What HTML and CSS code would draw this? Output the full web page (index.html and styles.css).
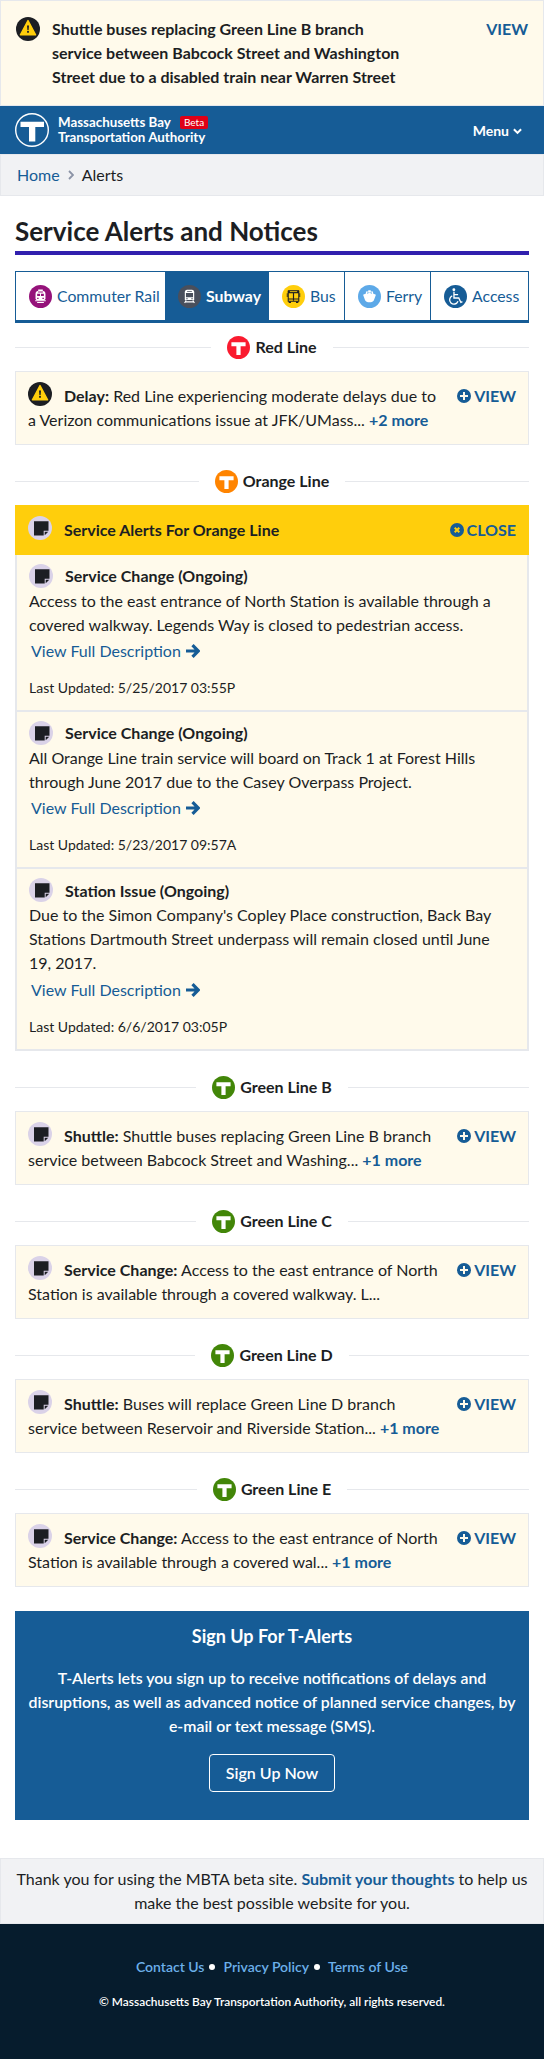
FILE: index.html
```html
<!DOCTYPE html>
<html lang="en">
<head>
<meta charset="utf-8">
<title>Alerts | MBTA</title>
<link rel="stylesheet" href="styles.css">
</head>
<body>
<svg width="0" height="0" class="defs">
  <symbol id="warn" viewBox="0 0 24 24"><circle cx="12" cy="12" r="12" fill="#1c1e23"/><path d="M12 3.6 19.6 17.8H4.4Z" fill="#ffce0c" stroke="#ffce0c" stroke-width="1.4" stroke-linejoin="round"/><path d="M11 8.4h2l-.4 4.8h-1.2zM11.1 14h1.8v1.7h-1.8z" fill="#1c1e23"/></symbol>
  <symbol id="note" viewBox="0 0 24 24"><circle cx="12" cy="12" r="12" fill="#dad2e8"/><path d="M6 5.300h14.500v9.400h-4.800v4.900H6z" fill="#1c1e23"/><path d="M16.700 15.700h3.600l-3.600 3.600z" fill="#1c1e23"/></symbol>
  <symbol id="tee" viewBox="0 0 24 24"><circle cx="12" cy="12" r="12" fill="currentColor"/><path d="M4.600 6.500h14.800v4.300h-5.200v8.900H9.800v-8.900H4.600z" fill="#fff"/></symbol>
  <symbol id="plus" viewBox="0 0 14 14"><circle cx="7" cy="7" r="7" fill="currentColor"/><path d="M7 3v8M3 7h8" stroke="#fffaeb" stroke-width="2"/></symbol>
  <symbol id="times" viewBox="0 0 14 14"><circle cx="7" cy="7" r="7" fill="currentColor"/><path d="m4.700 4.700 4.600 4.600m0-4.600L4.700 9.300" stroke="#ffce0c" stroke-width="2"/></symbol>
  <symbol id="arrow" viewBox="0 0 14 14"><path d="M0 7h11M6.500 1.200 12.300 7l-5.800 5.800" fill="none" stroke="currentColor" stroke-width="3.200"/></symbol>
</svg>

<section class="banner">
  <svg class="badge"><use href="#warn"/></svg>
  <p class="banner-text">Shuttle buses replacing Green Line B branch service between Babcock Street and Washington Street due to a disabled train near Warren Street</p>
  <a class="banner-view">VIEW</a>
</section>

<header class="header">
  <svg class="logo" viewBox="0 0 34 34"><circle cx="17" cy="17" r="16.300" fill="none" stroke="#fff" stroke-width="1.400"/><path d="M5.500 8.700H29V14h-8.700v14.500H14V14H5.500z" fill="#fff"/></svg>
  <div class="brand">
    <div class="brand-row">Massachusetts Bay<span class="beta">Beta</span></div>
    <div>Transportation Authority</div>
  </div>
  <div class="menu">Menu<svg width="9" height="7" viewBox="0 0 9 7"><path d="M.9 1.200 4.500 4.900 8.100 1.200" fill="none" stroke="#fff" stroke-width="2"/></svg></div>
</header>

<nav class="crumbs">
  <a>Home</a>
  <svg width="6" height="10" viewBox="0 0 6 10"><path d="m1 1 4 4-4 4" fill="none" stroke="#8b93a6" stroke-width="1.800"/></svg>
  <span>Alerts</span>
</nav>

<main class="main">
  <h1 class="title">Service Alerts and Notices</h1>
  <div class="tabs">
    <a class="tab tab-rail"><svg class="mode" viewBox="0 0 24 24"><circle cx="12" cy="12" r="12" fill="#95127a"/><path d="M9.600 4.800h4.800v1.200c1.900.4 2.800 1.600 2.800 3.300v5.400l-1.200 1.300H8l-1.200-1.300V9.300c0-1.700.9-2.900 2.800-3.300z" fill="#fff"/><path d="M8.500 9h3v2.600h-3zM12.500 9h3v2.600h-3zM9.500 6.900h5v.8h-5z" fill="#95127a"/><path d="M8.500 13.400H10v1.200H8.500zM14 13.400h1.500v1.200H14z" fill="#95127a"/><path d="M6.500 16.400h11M8.500 18.300h7" stroke="#fff" stroke-width="1.200"/></svg>Commuter Rail</a>
    <a class="tab tab-subway"><svg class="mode" viewBox="0 0 24 24"><circle cx="12" cy="12" r="12" fill="#494f5c"/><path d="M9.500 5h5c1.600 0 2.400 1 2.400 2.500v8.200H7.100V7.500C7.100 6 7.900 5 9.500 5z" fill="#fff"/><path d="M8.300 8.300h7.400v4.600H8.300zM9.500 6.200h5v.9h-5zM8.600 13.800h1.500v1H8.600zM13.900 13.800h1.500v1h-1.500z" fill="#494f5c"/><path d="m8.500 16-1.600 2.700M15.500 16l1.600 2.700M8 17.600h8" stroke="#fff" stroke-width="1.100"/></svg>Subway</a>
    <a class="tab tab-bus"><svg class="mode" viewBox="0 0 24 24"><circle cx="12" cy="12" r="12" fill="#ffce0c"/><path d="M6.500 6.500h11v10.500h-11z" fill="none" stroke="#1c1e23" stroke-width="1.100"/><path d="M6.200 5.500h11.600v3H6.200zM11.400 8h1.200v8.500h-1.200zM6.500 14.200h11v.9h-11zM7 17.200h2.400v1.500H7zM14.600 17.200H17v1.500h-2.400zM5 8.500h.9v4H5zM18.100 8.500h.9v4h-.9z" fill="#1c1e23"/><path d="M8.200 6.500h7.600v.9H8.200z" fill="#ffce0c"/></svg>Bus</a>
    <a class="tab tab-ferry"><svg class="mode" viewBox="0 0 24 24"><circle cx="12" cy="12" r="12" fill="#5da9e8"/><path d="M10.700 5.500h2.600v1.200h2.400v2.200l3 1.400-2 5.400c-.6 1.400-2.500 2.400-4.700 2.400s-4.100-1-4.700-2.400l-2-5.400 3-1.400V6.700h2.400z" fill="#fff"/><path d="M9.500 7.900h5v1.100L12 8l-2.500 1z" fill="#5da9e8"/></svg>Ferry</a>
    <a class="tab tab-access"><svg class="mode" viewBox="0 0 24 24"><circle cx="12" cy="12" r="12" fill="#165c96"/><circle cx="10.300" cy="5" r="1.500" fill="#fff"/><path d="M10.400 7v6.600h5l2.200 4.600 1.600-.8M10.700 10h4M8.600 11.300a4.500 4.500 0 1 0 6 5.700" fill="none" stroke="#fff" stroke-width="1.400"/></svg>Access</a>
  </div>

  <h2 class="line"><svg class="tee red"><use href="#tee"/></svg>Red Line</h2>
  <article class="card">
    <p class="card-text"><svg class="badge"><use href="#warn"/></svg><b>Delay:</b> Red Line experiencing moderate delays due to<br>a Verizon communications issue at JFK/UMass... <b class="more">+2 more</b></p>
    <a class="toggle"><svg><use href="#plus"/></svg>VIEW</a>
  </article>

  <h2 class="line"><svg class="tee orange"><use href="#tee"/></svg>Orange Line</h2>
  <article class="open">
    <header class="open-head">
      <svg class="badge"><use href="#note"/></svg><b>Service Alerts For Orange Line</b>
      <a class="toggle"><svg><use href="#times"/></svg>CLOSE</a>
    </header>
    <section class="item">
      <h3><svg class="badge"><use href="#note"/></svg>Service Change (Ongoing)</h3>
      <p>Access to the east entrance of North Station is available through a covered walkway. Legends Way is closed to pedestrian access.</p>
      <a class="full">View Full Description<svg><use href="#arrow"/></svg></a>
      <small>Last Updated: 5/25/2017 03:55P</small>
    </section>
    <section class="item">
      <h3><svg class="badge"><use href="#note"/></svg>Service Change (Ongoing)</h3>
      <p>All Orange Line train service will board on Track 1 at Forest Hills through June 2017 due to the Casey Overpass Project.</p>
      <a class="full">View Full Description<svg><use href="#arrow"/></svg></a>
      <small>Last Updated: 5/23/2017 09:57A</small>
    </section>
    <section class="item">
      <h3><svg class="badge"><use href="#note"/></svg>Station Issue (Ongoing)</h3>
      <p>Due to the Simon Company's Copley Place construction, Back Bay Stations Dartmouth Street underpass will remain closed until June 19, 2017.</p>
      <a class="full">View Full Description<svg><use href="#arrow"/></svg></a>
      <small>Last Updated: 6/6/2017 03:05P</small>
    </section>
  </article>

  <h2 class="line"><svg class="tee green"><use href="#tee"/></svg>Green Line B</h2>
  <article class="card">
    <p class="card-text"><svg class="badge"><use href="#note"/></svg><b>Shuttle:</b> Shuttle buses replacing Green Line B branch<br>service between Babcock Street and Washing... <b class="more">+1 more</b></p>
    <a class="toggle"><svg><use href="#plus"/></svg>VIEW</a>
  </article>

  <h2 class="line"><svg class="tee green"><use href="#tee"/></svg>Green Line C</h2>
  <article class="card">
    <p class="card-text"><svg class="badge"><use href="#note"/></svg><b>Service Change:</b> Access to the east entrance of North<br>Station is available through a covered walkway. L...</p>
    <a class="toggle"><svg><use href="#plus"/></svg>VIEW</a>
  </article>

  <h2 class="line"><svg class="tee green"><use href="#tee"/></svg>Green Line D</h2>
  <article class="card">
    <p class="card-text"><svg class="badge"><use href="#note"/></svg><b>Shuttle:</b> Buses will replace Green Line D branch<br>service between Reservoir and Riverside Station... <b class="more">+1 more</b></p>
    <a class="toggle"><svg><use href="#plus"/></svg>VIEW</a>
  </article>

  <h2 class="line"><svg class="tee green"><use href="#tee"/></svg>Green Line E</h2>
  <article class="card">
    <p class="card-text"><svg class="badge"><use href="#note"/></svg><b>Service Change:</b> Access to the east entrance of North<br>Station is available through a covered wal... <b class="more">+1 more</b></p>
    <a class="toggle"><svg><use href="#plus"/></svg>VIEW</a>
  </article>

  <section class="signup">
    <h2>Sign Up For T-Alerts</h2>
    <p>T-Alerts lets you sign up to receive notifications of delays and<br>disruptions, as well as advanced notice of planned service changes, by<br>e-mail or text message (SMS).</p>
    <a class="button">Sign Up Now</a>
  </section>
</main>

<section class="thanks">Thank you for using the MBTA beta site. <b class="more">Submit your thoughts</b> to help us<br>make the best possible website for you.</section>

<footer class="footer">
  <div class="links"><a>Contact Us</a><i></i><a>Privacy Policy</a><i></i><a>Terms of Use</a></div>
  <div class="copy">© Massachusetts Bay Transportation Authority, all rights reserved.</div>
</footer>
</body>
</html>
```
FILE: styles.css
```css
* { box-sizing: border-box; }
body { margin: 0; background: #fff; color: #1c1e23; font: 16px/24px Lato, sans-serif; }
h1, h2, h3, p { margin: 0; }
svg { flex: none; }
.defs { display: block; height: 0; }
b { font-weight: 700; }
.badge { width: 24px; height: 24px; }
.more { color: #165c96; }

.banner { height: 106px; display: flex; align-items: flex-start; padding: 16px 15px; background: #fffaeb; border: 1px solid #e6e8ec; }
.banner-text { margin-left: 12px; width: 360px; font-weight: 700; }
.banner-view { margin-left: auto; color: #165c96; font-weight: 700; }

.header { height: 48px; display: flex; align-items: center; padding: 0 22px 0 15px; background: #165c96; color: #fff; }
.logo { width: 34px; height: 34px; }
.brand { margin-left: 9px; font-size: 13.350px; line-height: 15.500px; font-weight: 700; }
.brand-row { display: flex; align-items: center; }
.beta { margin-left: 9px; height: 13px; padding: 0 4px; border-radius: 2px; background: #df0016; font-size: 10px; line-height: 13px; font-weight: 400; }
.menu { margin-left: auto; display: flex; align-items: center; gap: 4px; font-size: 14px; font-weight: 700; padding-top: 2px; }

.crumbs { height: 42px; display: flex; align-items: center; gap: 8px; padding: 0 16px; background: #f1f2f4; border: 1px solid #e6e8ec; }
.crumbs a { color: #165c96; }

.main { padding: 17px 15px 38px; }
.title { height: 42px; border-bottom: 4px solid #3120ae; font-size: 26px; line-height: 36px; font-weight: 700; }
.tabs { margin-top: 16px; height: 52px; display: flex; border: 1px solid #165c96; border-bottom-width: 3px; }
.tab { display: flex; align-items: center; gap: 5px; padding-left: 13px; color: #165c96; border-right: 1px solid #165c96; font-size: 15.800px; white-space: nowrap; }
.tab:last-child { border-right: 0; }
.mode { width: 23px; height: 23px; }
.tab-rail { width: 149px; border: 0; }
.tab-subway { width: 104px; background: #165c96; color: #fff; font-weight: 700; }
.tab-bus { width: 76px; }
.tab-ferry { width: 86px; }
.tab-access { flex: 1; }

.line { height: 24px; margin: 12px 0; display: flex; align-items: center; font-size: 16px; font-weight: 700; }
.line::before, .line::after { content: ""; flex: 1; height: 1px; background: #e6e8ec; }
.line::before { margin-right: 16px; }
.line::after { margin-left: 16px; }
.tee { width: 23px; height: 23px; margin-right: 5px; }
.red { color: #fa1b2f; }
.orange { color: #ff8400; }
.green { color: #428608; }

.card { height: 74px; display: flex; justify-content: space-between; padding: 12px; background: #fffaeb; border: 1px solid #e6e8ec; white-space: nowrap; }
.card + .line, .open + .line { margin-top: 24px; }
.card .badge { float: left; margin: -2px 12px 0 0; height: 24px; }
.toggle { display: flex; height: 24px; align-items: center; gap: 3px; color: #165c96; font-weight: 700; }
.toggle svg { width: 14px; height: 14px; }

.open { background: #fffaeb; }
.open-head { height: 50px; display: flex; align-items: center; padding: 0 13px; background: #ffce0c; }
.open-head .badge { margin: -4px 12px 0 0; }
.open-head .toggle { margin-left: auto; }
.item { height: 157px; padding: 9px 12px 0; border: 2px solid #e6e8ec; border-top: 0; }
.item h3 { display: flex; gap: 12px; height: 25px; font-size: 16px; line-height: 23px; }
.item:last-child { height: 182px; }
.item:last-child h3 { line-height: 25px; }
.full { display: flex; align-items: center; gap: 5px; margin: 2px 0 0 2px; color: #165c96; }
.item:last-child .full { margin-top: 3px; }
.full svg { width: 14px; height: 14px; }
.item small { display: block; margin-top: 13px; font-size: 14px; }

.signup { margin-top: 24px; height: 209px; padding: 13px 0; background: #165c96; color: #fff; text-align: center; }
.signup h2 { font-size: 18px; line-height: 24px; font-weight: 700; }
.signup p { margin-top: 18px; font-size: 15.870px; font-weight: 600; white-space: nowrap; }
.button { display: inline-block; margin-top: 16px; height: 38px; padding: 0 16px; border: 1px solid #fff; border-radius: 4px; line-height: 36px; font-weight: 600; }

.thanks { height: 66px; padding-top: 8px; background: #f1f2f4; border: 1px solid #e6e8ec; text-align: center; white-space: nowrap; }
.footer { height: 135px; padding-top: 31px; background: #061c2d; color: #fff; text-align: center; }
.links { display: flex; justify-content: center; align-items: center; font-size: 14px; font-weight: 600; color: #6cb0ea; }
.links i { width: 6px; height: 6px; margin: 0 8px 0 5px; border-radius: 50%; background: #fff; }
.copy { margin-top: 11px; font-size: 11.900px; font-weight: 600; }
```
